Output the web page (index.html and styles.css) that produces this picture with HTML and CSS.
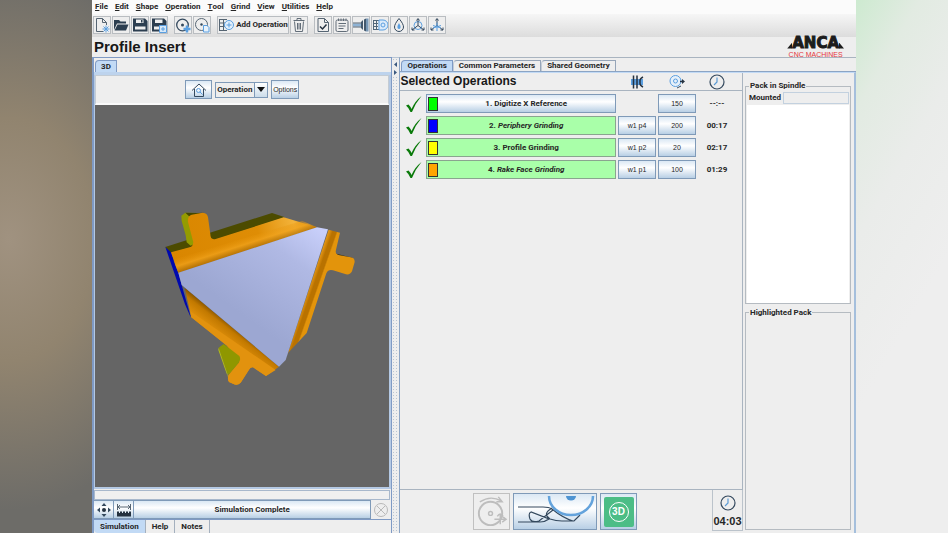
FILE: index.html
```html
<!DOCTYPE html>
<html lang="en">
<head>
<meta charset="utf-8">
<title>Profile Insert</title>
<link rel="stylesheet" href="styles.css">
</head>
<body>
<svg class="defs" aria-hidden="true">
  <defs>
    <symbol id="clock" viewBox="0 0 16 16"><circle cx="8" cy="8" r="7" fill="none" stroke="#34495e" stroke-width="1.2"/><path d="M8 3.5V8L5 11" fill="none" stroke="#5b9bd5" stroke-width="1.2"/></symbol>
    <symbol id="check" viewBox="0 0 18 18"><path d="M1 10.5 3.5 9.5Q5.500 11.500 6.500 14Q10 6 16.500 1Q10.500 8 7 17H5.500Q4 13 1 10.500Z" fill="#0a7a0a"/></symbol>
    <linearGradient id="top" x1="70" y1="185" x2="500" y2="70" gradientUnits="userSpaceOnUse"><stop offset="0" stop-color="#d98600"/><stop offset=".6" stop-color="#df8d05"/><stop offset=".85" stop-color="#f3b33a"/><stop offset="1" stop-color="#d88700"/></linearGradient>
    <linearGradient id="fold" x1="270" y1="110" x2="286" y2="160" gradientUnits="userSpaceOnUse"><stop offset="0" stop-color="#e28f04" stop-opacity="0"/><stop offset=".5" stop-color="#f0a21c"/><stop offset="1" stop-color="#8f5900"/></linearGradient>
    <linearGradient id="low" x1="205" y1="400" x2="240" y2="355" gradientUnits="userSpaceOnUse"><stop offset="0" stop-color="#dc8d0a"/><stop offset=".5" stop-color="#c27900"/><stop offset="1" stop-color="#5d3a00"/></linearGradient>
    <linearGradient id="side" x1="470" y1="270" x2="510" y2="284" gradientUnits="userSpaceOnUse"><stop offset="0" stop-color="#f0a01b"/><stop offset=".35" stop-color="#b97200"/><stop offset=".6" stop-color="#b97200"/><stop offset=".7" stop-color="#e3940b"/><stop offset="1" stop-color="#e3940b"/></linearGradient>
    <linearGradient id="face" x1="510" y1="90" x2="310" y2="370" gradientUnits="userSpaceOnUse"><stop offset="0" stop-color="#c8cffa"/><stop offset=".35" stop-color="#b0b9e4"/><stop offset="1" stop-color="#9ca7d2"/></linearGradient>
  </defs>
</svg>
<div class="screen">
<div class="backdrop-left"></div>
<div class="app">
  <header>
    <nav class="menubar">
      <button><u>F</u>ile</button><button><u>E</u>dit</button><button><u>S</u>hape</button><button><u>O</u>peration</button><button><u>T</u>ool</button><button><u>G</u>rind</button><button><u>V</u>iew</button><button><u>U</u>tilities</button><button><u>H</u>elp</button>
    </nav>
    <div class="toolbar">
      <div class="group">
        <button aria-label="New"><svg viewBox="0 0 16 16"><path d="M9.500 14.500H2.500V1.500H8.500L12.500 5.500V8M8.500 1.500V5.500H12.500" fill="none" stroke="#566573"/><path d="M12 8.500V15.500M8.500 12H15.500M9.500 9.500 14.500 14.500M14.500 9.500 9.500 14.500" stroke="#5b9fe0"/></svg></button>
        <button aria-label="Open"><svg viewBox="0 0 16 16"><path d="M1 13V3H6L7.500 4.500H13V6.500H4Z" fill="#2c3e50"/><path d="M4.500 7.500H15.500L13 13.500H1.500Z" fill="#2c3e50"/></svg></button>
        <button aria-label="Save"><svg viewBox="0 0 16 16"><path d="M1 1.500H13L15.500 4V14.500H1Z" fill="#2c3e50"/><path d="M4 2.500H11.500V6H4ZM3 9.500H13.500V12.500H3Z" fill="#eee"/><path d="M9 3H10.500V5.500H9Z" fill="#2c3e50"/></svg></button>
        <button aria-label="Save as"><svg viewBox="0 0 16 16"><path d="M1 1.500H13L15.500 4V14.500H1Z" fill="#2c3e50"/><path d="M4 2.500H11.500V6H4ZM3 9.500H9V12.500H3Z" fill="#eee"/><path d="M8.500 8.500H15.500V15.500H8.500Z" fill="#d6e8f8" stroke="#5b9fe0"/><path d="M12 10V14M10 12H14" stroke="#5b9fe0"/></svg></button>
      </div>
      <div class="group">
        <button aria-label="Add wheel"><svg viewBox="0 0 16 16"><circle cx="7.500" cy="8" r="5.800" fill="none" stroke="#34495e" stroke-width="1.300"/><circle cx="7.500" cy="8" r="1.500" fill="#34495e"/><path d="M12 8.500V15.500M8.500 12H15.500" stroke="#5b9fe0" stroke-width="2.500"/></svg></button>
        <button aria-label="Wheel file"><svg viewBox="0 0 16 16"><circle cx="7.500" cy="7.500" r="6" fill="none" stroke="#566573"/><circle cx="7.500" cy="7.500" r="1.200" fill="#34495e"/><path d="M9.500 8.500H13L15 10.500V15H9.500Z" fill="#e8f2fb" stroke="#5b9fe0"/></svg></button>
      </div>
      <div class="group">
        <button class="wide"><svg viewBox="0 0 16 16"><path d="M1 2.500H9M1 6H7M1 9.500H7M1 13.500H9M1.500 2.500V13.500M5.500 2.500V13.500" fill="none" stroke="#566573"/><circle cx="11" cy="8" r="4.500" fill="#e4f0fb" stroke="#5b9fe0"/><path d="M11 5.500V10.500M8.500 8H13.500" stroke="#5b9fe0"/></svg>Add Operation</button>
        <button aria-label="Delete"><svg viewBox="0 0 16 16"><path d="M2.500 3.500H13.500M6 3V1.500H10V3M3.500 4.500 4.500 14.500H11.500L12.500 4.500M6.500 6V12.500M8 6V12.500M9.500 6V12.500" fill="none" stroke="#626d78"/></svg></button>
      </div>
      <div class="group">
        <button aria-label="Validate"><svg viewBox="0 0 16 16"><path d="M3 1.500H9.500L13.500 5.500V14.500H3ZM9.500 1.500V5.500H13.500" fill="none" stroke="#566573"/><path d="M5 9.500 7.500 12 11.500 7.500" fill="none" stroke="#24313f" stroke-width="1.500"/></svg></button>
        <button aria-label="Notes"><svg viewBox="0 0 16 16"><rect x="2" y="3" width="12" height="11.500" rx="1.500" fill="none" stroke="#626d78"/><path d="M4.500 1.500V4M7 1.500V4M9.500 1.500V4M12 1.500V4M4.500 6.500H12M4.500 9H11.500M4.500 11.500H9.500" stroke="#626d78"/></svg></button>
        <button aria-label="Collet"><svg viewBox="0 0 16 16"><path d="M0 6.500H9V9.500H0Z" fill="#8eb3d5"/><path d="M0 6H9M0 10H9" stroke="#566573"/><path d="M8 5 10 3V13L8 11ZM11 2.500 13 1.500V14.500L11 13.500Z" fill="#43586d"/><path d="M13 1.500H15.500V14.500H13Z" fill="#7898b6"/></svg></button>
        <button aria-label="Probe"><svg viewBox="0 0 16 16"><path d="M1 3.500H7M1 6.500H6M1 9.500H6M1 12.500H7M1.500 3V13M4.500 3V13" stroke="#526779" fill="none"/><path d="M7 3H11A5 5 0 0 1 11 13H7Z" fill="#dbeafa" stroke="#5b9fe0"/><circle cx="11" cy="8" r="2" fill="none" stroke="#5b9fe0"/></svg></button>
        <button aria-label="Coolant"><svg viewBox="0 0 16 16"><path d="M8 1.500Q12.500 7 12.500 10A4.500 4.500 0 0 1 3.500 10Q3.500 7 8 1.500Z" fill="none" stroke="#34495e"/><path d="M8 6Q10 9 9.500 11A1.700 1.700 0 0 1 6.500 11Q6 9 8 6Z" fill="#5b9fe0"/></svg></button>
        <button aria-label="Rotate axes"><svg viewBox="0 0 16 16"><circle cx="8" cy="8.500" r="4" fill="none" stroke="#5b9fe0"/><path d="M8 2V8.500L2 13M8 8.500 14 13M6.500 3.500 8 1.500 9.500 3.500M2 10.500V13H4.500M14 10.500V13H11.500" fill="none" stroke="#34495e"/></svg></button>
        <button aria-label="Move axes"><svg viewBox="0 0 16 16"><path d="M8 2V8.500L2 13M8 8.500 14 13M6.500 3.500 8 1.500 9.500 3.500M2 10.500V13H4.500M14 10.500V13H11.500" fill="none" stroke="#34495e"/><path d="M8 5.500V14M4 8.500 12 11M4 11 12 8.500" stroke="#5b9fe0"/></svg></button>
      </div>
    </div>
    <div class="titlebar">
      <h1>Profile Insert</h1>
      <div class="logo"><strong>ANCA</strong><span>CNC MACHINES</span></div>
    </div>
  </header>
  <main>
    <section class="left">
      <div class="tabs top-tabs"><button class="tab active">3D</button></div>
      <div class="preview">
        <div class="view-tools">
          <button class="steel home" aria-label="Home view"><svg viewBox="0 0 16 16"><path d="M1 8.500 8 2 15 8.500M3.500 7V14.500H12.500V7" fill="none" stroke="#34495e"/><circle cx="7.500" cy="8.500" r="2" fill="none" stroke="#5b9fe0"/><path d="M9 10 11.500 12.500" stroke="#5b9fe0"/></svg></button>
          <div class="combo"><select aria-label="View"><option>Operation</option></select><span class="arrow"></span></div>
          <button class="steel options">Options</button>
        </div>
        <div class="viewport">
          <svg viewBox="-85 -12 720 600" role="img" aria-label="Insert model">
            <path d="M45 141 365 39 404 52 180 124 62 160Z" fill="#4c4b00"/>
            <path d="M93 47 105 38 140 39 118 58 132 132 121 137 109 127 106 106 94 63Z" fill="#949b00"/>
            <path d="M105 38 140 39 160 38 118 50Z" fill="#454900"/>
            <path d="M552 160 606 173 604 178 548 172Z" fill="#302a12"/>
            <path d="M45 141 62 157 84 218 94 255 120 346 121 352 104 313Z" fill="#0009ae"/>
            <path d="M62 157 118 142Q131 137 128 123L113 66Q111 48 124 44L157 38Q171 39 173 52L180 103Q180 121 196 117L400 52 500 82 84 218Z" fill="url(#top)"/>
            <path d="M68 179 455 62 500 82 84 218Z" fill="url(#fold)" opacity=".75"/>
            <path d="M103 263 386 500 347 528 308 502Q301 501 296 509L271 548Q260 559 248 551L236 546Q230 536 235 524L267 486 230 437 123 352Z" fill="url(#low)"/>
            <path d="M123 352 120 334 376 510 347 528 308 502Q301 501 296 509L271 548Q260 559 248 551L236 546Q230 536 235 524L267 486 230 437Z" fill="#e2920e"/>
            <path d="M220 432 267 468Q273 478 264 490L235 524 231 520 205 443Z" fill="#8f9700"/>
            <path d="M205 443 231 520 233 532 222 502 204 450Z" fill="#b4bd16"/>
            <path d="M535 89 569 98 557 149Q553 164 568 166L601 172Q613 173 613 186L605 214Q600 225 587 223L548 211Q534 207 528 220L469 399 413 459Z" fill="url(#side)"/>
            <path d="M84 218 500 82 533 88 484 240 406 480 386 500 94 255Z" fill="url(#face)"/>
          </svg>
        </div>
      </div>
      <div class="progress"></div>
      <div class="simbar">
        <button class="steel" aria-label="Pan"><svg viewBox="0 0 16 16"><circle cx="8" cy="8" r="2" fill="#24313f"/><path d="M8 1 10.500 4H5.500ZM8 15 5.500 12H10.500ZM1 8 4 5.500V10.500ZM15 8 12 10.500V5.500Z" fill="#34495e"/></svg></button>
        <button class="steel" aria-label="Measure"><svg viewBox="0 0 16 16"><path d="M1.500 2V8M14.500 2V8M2 5H14M4 3 2 5 4 7M12 3 14 5 12 7" stroke="#566573" fill="none"/><path d="M1 9.500H3V11H4V9.500H6V11H7V9.500H9V11H10V9.500H12V11H13V9.500H15V14.500H1Z" fill="#24313f"/></svg></button>
        <button class="steel status">Simulation Complete</button>
        <button class="cancel" aria-label="Cancel"><svg viewBox="0 0 16 16"><circle cx="8" cy="8" r="6.500" fill="none" stroke="#b9b9b9"/><path d="M4 4 12 12M12 4 4 12" stroke="#b9b9b9"/></svg></button>
      </div>
      <div class="bottom-tabs"><button class="active">Simulation</button><button>Help</button><button>Notes</button></div>
    </section>
    <div class="divider"><svg viewBox="0 0 5 16"><path d="M4 1V6L1 3.500ZM1 9V14L4 11.500Z" fill="#3d5a80"/></svg></div>
    <section class="right">
      <div class="tabs"><button class="tab active">Operations</button><button class="tab">Common Parameters</button><button class="tab">Shared Geometry</button></div>
      <div class="pane">
        <div class="work">
          <div class="oplist">
            <table>
              <colgroup><col class="c-check"><col><col class="c-pack"><col class="c-feed"><col class="c-time"></colgroup>
              <thead><tr>
                <th colspan="2"><h2>Selected Operations</h2></th>
                <th><svg viewBox="0 0 16 16" role="img" aria-label="Pack"><path d="M2 5H14V11H2Z" fill="#5b9fe0"/><path d="M4.500 1.500V14.500M8 1.500V14.500" stroke="#24313f" stroke-width="1.500"/><path d="M14 3Q11 4.500 11 6.500V9.500Q11 11.500 14 13" fill="none" stroke="#24313f" stroke-width="1.500"/></svg></th>
                <th><svg viewBox="0 0 16 16" role="img" aria-label="Feed"><circle cx="6.500" cy="7" r="5.500" fill="#e5f0fa" stroke="#5b9fe0"/><circle cx="6.500" cy="7" r="2" fill="none" stroke="#5b9fe0"/><path d="M11 7.500H14" stroke="#24313f" stroke-width="1.500"/><path d="M13 5 16 7.500 13 10Z" fill="#24313f"/><path d="M8 14 12 12" stroke="#34495e"/></svg></th>
                <th class="time"><svg role="img" aria-label="Time"><use href="#clock"/></svg></th>
              </tr></thead>
              <tbody>
                <tr><td><svg><use href="#check"/></svg></td><td><button class="steel op"><i class="chip green"></i><span>1. Digitize X Reference</span></button></td><td></td><td><button class="steel">150</button></td><td class="time">--:--</td></tr>
                <tr><td><svg><use href="#check"/></svg></td><td><button class="op done"><i class="chip blue"></i><span>2. <em>Periphery Grinding</em></span></button></td><td><button class="steel">w1 p4</button></td><td><button class="steel">200</button></td><td class="time">00:17</td></tr>
                <tr><td><svg><use href="#check"/></svg></td><td><button class="op done"><i class="chip yellow"></i><span>3. Profile Grinding</span></button></td><td><button class="steel">w1 p2</button></td><td><button class="steel">20</button></td><td class="time">02:17</td></tr>
                <tr><td><svg><use href="#check"/></svg></td><td><button class="op done"><i class="chip orange"></i><span>4. <em>Rake Face Grinding</em></span></button></td><td><button class="steel">w1 p1</button></td><td><button class="steel">100</button></td><td class="time">01:29</td></tr>
              </tbody>
            </table>
          </div>
          <div class="actions">
            <button class="dim" aria-label="Wheel"><svg viewBox="0 0 36 36"><circle cx="17" cy="20" r="12" fill="none" stroke="#bdbdbd" stroke-width="2"/><circle cx="17" cy="20" r="2" fill="none" stroke="#bdbdbd" stroke-width="1.500"/><path d="M6 8Q17 1 28 7M25 3 29 8 23 8" fill="none" stroke="#bdbdbd" stroke-width="1.500"/><path d="M27 21V31M21 26H32M24 23Q27 18 30 23M29 23 33 26 29 29" fill="none" stroke="#bdbdbd" stroke-width="1.500"/></svg></button>
            <button class="steel grind" aria-label="Grind tool"><svg viewBox="0 0 82 35"><path d="M4 13H29Q35 13 38 15Q49 24 59 27M38 14Q28 20 36 25Q42 27 48 27H60L66 21M4 28H26Q31 28 35 25L17 18Q14 19 16 25Q18 29 25 27L39 16" fill="none" stroke="#34495e" stroke-width="1.200"/><path d="M35 2A22 19 0 0 0 79 2" fill="none" stroke="#64a3dc" stroke-width="2.500"/><path d="M52 2A5 4.500 0 0 0 62 2Z" fill="#4f94d2"/></svg></button>
            <button class="steel threed"><span class="tile"><span>3D</span></span></button>
            <div class="total"><svg><use href="#clock"/></svg><b>04:03</b></div>
          </div>
        </div>
        <aside>
          <fieldset class="spindle"><legend>Pack in Spindle</legend>
            <div class="mounted"><label for="mounted">Mounted</label><input id="mounted" readonly></div>
            <div class="sheet"></div>
          </fieldset>
          <fieldset class="highlight"><legend>Highlighted Pack</legend></fieldset>
        </aside>
      </div>
    </section>
  </main>
</div>
<div class="backdrop-right"></div>
</div>
</body>
</html>
```
FILE: styles.css
```css
* { box-sizing: border-box; }
body { margin: 0; font: bold 8px/10px Roboto, "Liberation Sans", sans-serif; color: #262626; }
button, input, select { font: inherit; color: inherit; margin: 0; padding: 0; border-radius: 0; }
button { display: flex; align-items: center; justify-content: center; border: 0; background: none; white-space: nowrap; }
h1, h2 { margin: 0; font-family: "Liberation Sans", sans-serif; color: #181818; }
svg { display: block; flex: none; }
.defs { position: absolute; width: 0; height: 0; }

.screen { display: grid; grid-template-columns: 92px minmax(0, 1fr) 92px; height: 100vh; overflow: hidden; }
.backdrop-left { background: radial-gradient(ellipse 190px 270px at 10% 45%, #a09280, #91846f 45%, #6d6c68 100%); }
.backdrop-right { background: linear-gradient(120deg, #cdead0, #e2ebe2 16%, #eaecea 35%, #eee 60%); }
.app { display: flex; flex-direction: column; min-height: 0; background: #eee; }

.menubar { display: flex; gap: 7px; height: 14px; padding: 0 3px; background: #fbfbfb; }
.menubar u { text-underline-offset: 1px; }
.toolbar { display: flex; gap: 6px; height: 23px; padding: 2px 1px; background: linear-gradient(#f6f6f6, #dcdcdc); }
.group { display: flex; gap: 1px; }
.group button { width: 18px; height: 18px; border: 1px solid #b9bdc1; background: #eee; }
.group svg { width: 16px; height: 16px; }
.group .wide { width: 72px; gap: 2px; }
.titlebar { display: flex; justify-content: space-between; align-items: center; height: 20px; padding: 0 12px 0 2px; }
h1 { font-size: 15px; line-height: 20px; }
.logo { display: flex; flex-direction: column; align-items: center; gap: 2px; color: #e5353c; font: 7px/7px "Liberation Sans", sans-serif; }
.logo strong { display: flex; align-items: flex-end; font: bold 15px/12px "DejaVu Sans", sans-serif; color: #1c1c1c; -webkit-text-stroke: 1px #1c1c1c; }
.logo strong::before, .logo strong::after { content: ""; width: 5px; height: 6px; background: #1c1c1c; clip-path: polygon(100% 0, 100% 100%, 0 100%); }
.logo strong::after { clip-path: polygon(0 0, 100% 100%, 0 100%); }

main { display: flex; flex: 1; min-height: 0; }
.left { display: flex; flex-direction: column; flex: 299 1 0; min-width: 0; border: solid #7f9ac4; border-width: 1px 1px 0 2px; }
.divider { flex: 0 0 7px; padding: 3px 1px; background: radial-gradient(#b8c4d2 1px, transparent 1px) 0 0 / 3px 3px; border-top: 1px solid #b7c5d5; }
.divider svg { width: 5px; height: 16px; background: #eee; }
.right { display: flex; flex-direction: column; flex: 458 1 0; min-width: 0; border-top: 1px solid #a9b4c0; border-left: 1px solid #8ba4c4; }

.tabs { display: flex; height: 14px; align-items: flex-end; padding-left: 1px; border-bottom: 1px solid #8ba4c4; }
.tab { height: 11px; padding: 0 5px; border: 1px solid #96a5b8; border-bottom: 0; border-left-color: #c4ccd6; border-top-left-radius: 4px; font-size: 8px; }
.tab.active { background: #c2daf5; border-color: #7f9ac4; }
.top-tabs { height: 17px; border-bottom: 3px solid #bdd3ed; }
.top-tabs .tab { height: 12px; width: 22px; }

.steel { border: 1px solid #7f9ab8; background: linear-gradient(#dbe8f4, #fff 40%, #b8cfe5); }
.preview { display: flex; flex-direction: column; flex: 1; min-height: 0; border: solid #b4c9e4; border-width: 0 2px 2px 1px; }
.view-tools { display: flex; align-items: center; justify-content: center; gap: 3px; height: 30px; border: 1px solid #c4ccd4; border-bottom: 2px solid #fafafa; }
.home { width: 27px; height: 19px; }
.home svg { width: 16px; height: 16px; }
.combo { display: flex; width: 53px; height: 16px; border: 1px solid #7f9ab8; }
.combo select { flex: 1; min-width: 0; appearance: none; border: 0; padding: 0 0 0 1px; background: #eee; }
.arrow { width: 13px; border-left: 1px solid #7f9ab8; background: linear-gradient(#fff, #ccdcea); display: grid; place-items: center; }
.arrow::after { content: ""; border: solid transparent; border-width: 5px 4px 0; border-top-color: #111; }
.options { width: 28px; height: 19px; font-size: 7px; font-weight: 400; font-family: "Liberation Sans", sans-serif; }
.viewport { display: grid; place-items: center; flex: 1; min-height: 0; background: #656565; }
.viewport svg { width: 240px; height: 200px; }
.progress { height: 10px; margin: 1px 1px 0 0; border: 1px solid #a8b8cc; background: #f0f0f0; }
.simbar { display: flex; height: 20px; border-bottom: 1px solid #7f9ac4; }
.simbar button { width: 20px; border-left-width: 0; }
.simbar svg { width: 16px; height: 16px; }
.simbar .status { flex: 1; }
.bottom-tabs { display: flex; height: 13px; }
.bottom-tabs button { padding: 0 6px; border-right: 1px solid #a4b0be; border-bottom-left-radius: 4px; }
.bottom-tabs .active { background: #c2daf5; }

.pane { display: flex; gap: 2px; flex: 1; min-height: 0; border-right: 2px solid #a5bfdc; border-top: 1px solid #c2daf5; }
.work { display: flex; flex-direction: column; flex: 1; min-width: 0; }
.oplist { flex: 1; border: solid #a9b4c0; border-width: 0 1px 1px 0; }
table { width: 100%; table-layout: fixed; border-collapse: separate; border-spacing: 0; }
.c-check { width: 25px; }
.c-pack, .c-feed { width: 40px; }
.c-time { width: 45px; }
th { height: 18px; padding: 0; border-bottom: 1px solid #a9b4c0; text-align: left; }
th svg { width: 16px; height: 16px; margin: auto; }
h2 { font-size: 12px; line-height: 17px; white-space: nowrap; }
td { padding: 3px 1px 0; height: 22px; }
td svg { width: 18px; height: 18px; margin-left: 4px; }
td button { width: 100%; height: 19px; font: 7px/10px "Liberation Sans", sans-serif; }
td.time, th.time { padding-right: 6px; text-align: center; }
td .op { font: bold 8px/10px Roboto, sans-serif; padding: 0 1px; }
.op span { flex: 1; text-align: center; }
.done { border: 1px solid #8aa58f; background: #a9ffa9; }
.chip { width: 10px; height: 14px; border: 1px solid #333; }
.green { background: #0f0; }
.blue { background: #00f; }
.yellow { background: #ff0; }
.orange { background: #ffa500; }

.actions { display: flex; align-items: flex-start; justify-content: flex-end; gap: 3px; height: 43px; }
.actions button { height: 37px; margin-top: 3px; }
.actions .dim, .actions .threed { width: 37px; }
.dim { border: 1px solid #c0c0c0; }
.dim svg { width: 35px; height: 35px; }
.grind { width: 84px; }
.grind svg { width: 82px; height: 35px; }
.tile { display: grid; place-items: center; width: 30px; height: 30px; border-radius: 2px; background: #4cbd86; }
.tile span { width: 20px; height: 20px; border: 1px solid #fff; border-radius: 50%; color: #fff; font: bold 10px/18px "Liberation Sans", sans-serif; }
.total { display: flex; flex-direction: column; align-items: center; width: 31px; height: 41px; margin-left: 72px; padding-top: 5px; gap: 4px; border: 1px solid #bbc3cb; border-top: 0; }
.total svg { width: 16px; height: 16px; }
.total b { font: bold 11px/12px "Liberation Sans", sans-serif; }

aside { display: flex; flex-direction: column; gap: 4px; flex: 0 0 109px; min-width: 0; padding: 8px 3px 3px 0; }
fieldset { display: flex; flex-direction: column; flex: 1; min-width: 0; min-height: 0; margin: 0; padding: 0 1px; border: 1px solid #b5bbc1; }
legend { margin-left: 2px; padding: 0 1px; }
.mounted { display: flex; align-items: center; height: 14px; padding-left: 2px; gap: 2px; }
.mounted input { flex: 1; width: 0; min-width: 0; height: 12px; border: 1px solid #c3d1df; background: #eee; }
.sheet { flex: 1; background: #fff; }
```
